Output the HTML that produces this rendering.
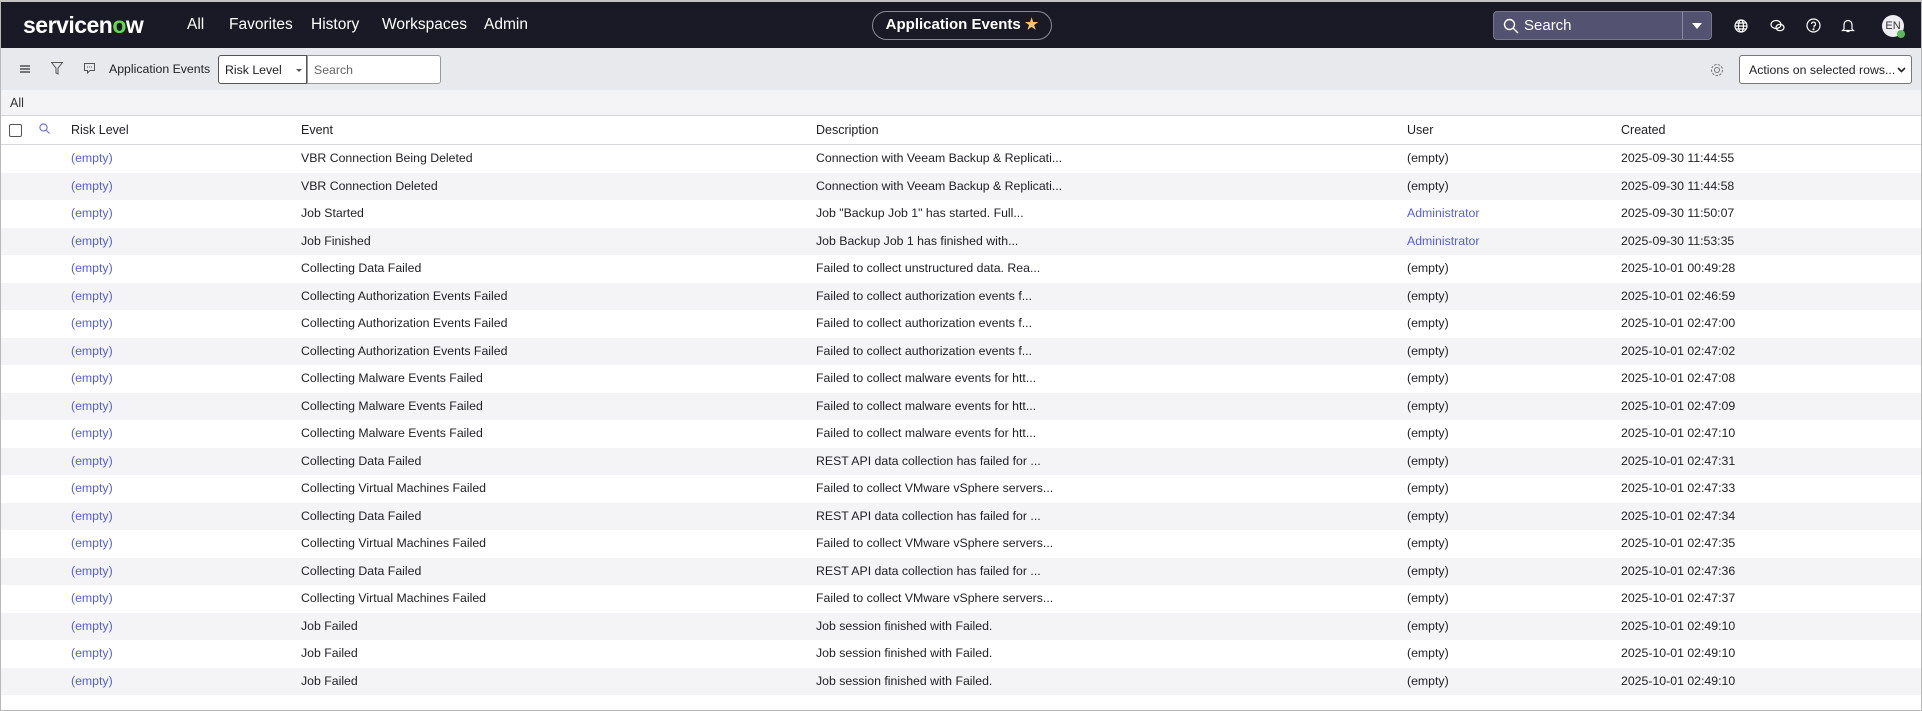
<!DOCTYPE html>
<html><head><meta charset="utf-8"><style>
*{box-sizing:border-box;margin:0;padding:0}
body{width:1922px;height:711px;overflow:hidden;background:#fff;font-family:"Liberation Sans",sans-serif;color:#1e1e24;position:relative;border:1px solid #b8b8b8;border-top:2px solid #c4c4c4}
.nav{position:absolute;left:0;top:0;width:1920px;height:46px;background:#1a1a26;color:#fff}
.nav .t{position:absolute;top:14px;font-size:15.5px;white-space:nowrap}
.logo{position:absolute;left:22px;top:10px;font-size:23px;font-weight:bold;letter-spacing:-0.5px}
.pill{position:absolute;left:871px;top:9px;width:180px;height:29px;border:1.5px solid #8a8a96;border-radius:15px;font-size:15px;font-weight:bold;text-align:center;line-height:26px}
.sb{position:absolute;left:1492px;top:9px;width:219px;height:29px;background:#535270;border:1px solid #77768c;border-radius:4px}
.tb{position:absolute;left:0;top:46px;width:1920px;height:42px;background:#e8e9ed}
.all{position:absolute;left:0;top:88px;width:1920px;height:26px;background:#f4f4f6;border-bottom:1px solid #d6d6da;font-size:12.5px;padding:6px 9px;color:#333}
.hdr{position:absolute;left:0;top:114px;width:1920px;height:29px;border-bottom:1px solid #d6d6da;font-size:12.5px}
.c{position:absolute;white-space:nowrap}
.rows{position:absolute;left:0;top:143px;width:1920px}
.r{height:27.5px;position:relative;font-size:12.3px}
.r:nth-child(even){background:#f4f4f6}
.r .c{top:6px}
.lk{color:#5560d8}
</style></head><body>
<div class="nav">
<div class="logo">servicen<span style="color:#62d84e">o</span>w</div>
<div class="t" style="left:186px">All</div>
<div class="t" style="left:228px">Favorites</div>
<div class="t" style="left:310px">History</div>
<div class="t" style="left:381px">Workspaces</div>
<div class="t" style="left:483px">Admin</div>
<div class="pill">Application Events <span style="color:#f5c46a">★</span></div>
<div class="sb"><svg style="position:absolute;left:9px;top:6px" width="16" height="16" viewBox="0 0 16 16" fill="none" stroke="#fff" stroke-width="1.4"><circle cx="6.5" cy="6.5" r="5"/><path d="M10 10l5 5"/></svg><span style="position:absolute;left:30px;top:5px;font-size:15px">Search</span><div style="position:absolute;left:188px;top:0;width:1px;height:27px;background:#8a8a9e"></div><div style="position:absolute;left:198px;top:11px;border-left:5px solid transparent;border-right:5px solid transparent;border-top:6px solid #fff"></div></div>
<svg style="position:absolute;left:1733px;top:17px" width="14" height="14" viewBox="0 0 14 14" fill="none" stroke="#fff" stroke-width="1.2"><circle cx="7" cy="7" r="6"/><ellipse cx="7" cy="7" rx="2.5" ry="6"/><path d="M1 7h12M2 4h10M2 10h10"/></svg>
<svg style="position:absolute;left:1769px;top:17px" width="15" height="14" viewBox="0 0 15 14" fill="none" stroke="#fff" stroke-width="1.2"><ellipse cx="6" cy="5.5" rx="5" ry="4"/><ellipse cx="10" cy="8.5" rx="4" ry="3.2"/></svg>
<svg style="position:absolute;left:1805px;top:16px" width="15" height="15" viewBox="0 0 15 15" fill="none" stroke="#fff" stroke-width="1.2"><circle cx="7.5" cy="7.5" r="6.5"/><path d="M5.5 6a2 2 0 1 1 2.5 2v1.5"/><circle cx="7.5" cy="11.3" r=".5" fill="#fff"/></svg>
<svg style="position:absolute;left:1840px;top:16px" width="14" height="15" viewBox="0 0 14 15" fill="none" stroke="#fff" stroke-width="1.2"><path d="M3 11V6.5a4 4 0 0 1 8 0V11l1.5 1.5h-11z"/><path d="M5.5 13.5h3"/></svg>
<div style="position:absolute;left:1881px;top:13px;width:22px;height:22px;border-radius:50%;background:#eeeef2;color:#333;font-size:11px;text-align:center;line-height:22px">EN</div>
<div style="position:absolute;left:1896px;top:28px;width:8px;height:8px;border-radius:50%;background:#5cb85c"></div>
</div>
<div class="tb">
<svg style="position:absolute;left:19px;top:17px" width="10" height="8" viewBox="0 0 10 8" stroke="#333" stroke-width="1.3"><path d="M0 1h10M0 4h10M0 7h10"/></svg>
<svg style="position:absolute;left:50px;top:14px" width="12" height="13" viewBox="0 0 12 13" fill="none" stroke="#555" stroke-width="1"><path d="M.5 .5h11L7 6v6L5 11V6z"/></svg>
<svg style="position:absolute;left:83px;top:15px" width="11" height="11" viewBox="0 0 11 11" fill="none" stroke="#555" stroke-width="1"><path d="M.5 .5h10v7H6l-2.5 2.5V7.5h-3z"/><path d="M3 4h5" stroke-dasharray="1 1"/></svg>
<div class="c" style="left:108px;top:14px;font-size:12.3px">Application Events</div>
<div style="position:absolute;left:217px;top:7px;width:89px;height:29px;background:#fff;border:1px solid #555;border-radius:3px 0 0 3px;font-size:12.3px;padding:7px 6px;white-space:nowrap">Risk Level<span style="position:absolute;left:77px;top:13px;border-left:3px solid transparent;border-right:3px solid transparent;border-top:3px solid #555"></span></div>
<div style="position:absolute;left:306px;top:7px;width:134px;height:29px;background:#fff;border:1px solid #999;border-radius:0 3px 3px 0;font-size:12.3px;padding:7px 6px;color:#666">Search</div>
<svg style="position:absolute;left:1709px;top:15px" width="14" height="14" viewBox="0 0 14 14" fill="none" stroke="#777" stroke-width="1"><circle cx="7" cy="7" r="2.5"/><circle cx="7" cy="7" r="5.5" stroke-dasharray="2.5 1.3"/></svg>
<div style="position:absolute;left:1738px;top:7px;width:173px;height:29px;background:#fff;border:1px solid #777;border-radius:3px;font-size:12.3px;padding:7px 9px;white-space:nowrap">Actions on selected rows...<svg style="position:absolute;right:5px;top:11px" width="9" height="6" viewBox="0 0 9 6" fill="none" stroke="#222" stroke-width="1.6"><path d="M1 1l3.5 3.5L8 1"/></svg></div>
</div>
<div class="all">All</div>
<div class="hdr">
<div style="position:absolute;left:8px;top:8px;width:13px;height:13px;border:1px solid #555;border-radius:2px"></div>
<svg style="position:absolute;left:38px;top:7px" width="11" height="11" viewBox="0 0 11 11" fill="none" stroke="#6a6ad0" stroke-width="1.1"><circle cx="4.5" cy="4.5" r="3.6"/><path d="M7 7l3.5 3.5"/></svg>
<div class="c" style="left:70px;top:7px">Risk Level</div>
<div class="c" style="left:300px;top:7px">Event</div>
<div class="c" style="left:815px;top:7px">Description</div>
<div class="c" style="left:1406px;top:7px">User</div>
<div class="c" style="left:1620px;top:7px">Created</div>
</div>
<div class="rows">
<div class="r"><span class="c lk" style="left:70px">(empty)</span><span class="c" style="left:300px">VBR Connection Being Deleted</span><span class="c" style="left:815px">Connection with Veeam Backup &amp; Replicati...</span><span class="c" style="left:1406px">(empty)</span><span class="c" style="left:1620px">2025-09-30 11:44:55</span></div>
<div class="r"><span class="c lk" style="left:70px">(empty)</span><span class="c" style="left:300px">VBR Connection Deleted</span><span class="c" style="left:815px">Connection with Veeam Backup &amp; Replicati...</span><span class="c" style="left:1406px">(empty)</span><span class="c" style="left:1620px">2025-09-30 11:44:58</span></div>
<div class="r"><span class="c lk" style="left:70px">(empty)</span><span class="c" style="left:300px">Job Started</span><span class="c" style="left:815px">Job "Backup Job 1" has started. Full...</span><span class="c lk" style="left:1406px">Administrator</span><span class="c" style="left:1620px">2025-09-30 11:50:07</span></div>
<div class="r"><span class="c lk" style="left:70px">(empty)</span><span class="c" style="left:300px">Job Finished</span><span class="c" style="left:815px">Job Backup Job 1 has finished with...</span><span class="c lk" style="left:1406px">Administrator</span><span class="c" style="left:1620px">2025-09-30 11:53:35</span></div>
<div class="r"><span class="c lk" style="left:70px">(empty)</span><span class="c" style="left:300px">Collecting Data Failed</span><span class="c" style="left:815px">Failed to collect unstructured data. Rea...</span><span class="c" style="left:1406px">(empty)</span><span class="c" style="left:1620px">2025-10-01 00:49:28</span></div>
<div class="r"><span class="c lk" style="left:70px">(empty)</span><span class="c" style="left:300px">Collecting Authorization Events Failed</span><span class="c" style="left:815px">Failed to collect authorization events f...</span><span class="c" style="left:1406px">(empty)</span><span class="c" style="left:1620px">2025-10-01 02:46:59</span></div>
<div class="r"><span class="c lk" style="left:70px">(empty)</span><span class="c" style="left:300px">Collecting Authorization Events Failed</span><span class="c" style="left:815px">Failed to collect authorization events f...</span><span class="c" style="left:1406px">(empty)</span><span class="c" style="left:1620px">2025-10-01 02:47:00</span></div>
<div class="r"><span class="c lk" style="left:70px">(empty)</span><span class="c" style="left:300px">Collecting Authorization Events Failed</span><span class="c" style="left:815px">Failed to collect authorization events f...</span><span class="c" style="left:1406px">(empty)</span><span class="c" style="left:1620px">2025-10-01 02:47:02</span></div>
<div class="r"><span class="c lk" style="left:70px">(empty)</span><span class="c" style="left:300px">Collecting Malware Events Failed</span><span class="c" style="left:815px">Failed to collect malware events for htt...</span><span class="c" style="left:1406px">(empty)</span><span class="c" style="left:1620px">2025-10-01 02:47:08</span></div>
<div class="r"><span class="c lk" style="left:70px">(empty)</span><span class="c" style="left:300px">Collecting Malware Events Failed</span><span class="c" style="left:815px">Failed to collect malware events for htt...</span><span class="c" style="left:1406px">(empty)</span><span class="c" style="left:1620px">2025-10-01 02:47:09</span></div>
<div class="r"><span class="c lk" style="left:70px">(empty)</span><span class="c" style="left:300px">Collecting Malware Events Failed</span><span class="c" style="left:815px">Failed to collect malware events for htt...</span><span class="c" style="left:1406px">(empty)</span><span class="c" style="left:1620px">2025-10-01 02:47:10</span></div>
<div class="r"><span class="c lk" style="left:70px">(empty)</span><span class="c" style="left:300px">Collecting Data Failed</span><span class="c" style="left:815px">REST API data collection has failed for ...</span><span class="c" style="left:1406px">(empty)</span><span class="c" style="left:1620px">2025-10-01 02:47:31</span></div>
<div class="r"><span class="c lk" style="left:70px">(empty)</span><span class="c" style="left:300px">Collecting Virtual Machines Failed</span><span class="c" style="left:815px">Failed to collect VMware vSphere servers...</span><span class="c" style="left:1406px">(empty)</span><span class="c" style="left:1620px">2025-10-01 02:47:33</span></div>
<div class="r"><span class="c lk" style="left:70px">(empty)</span><span class="c" style="left:300px">Collecting Data Failed</span><span class="c" style="left:815px">REST API data collection has failed for ...</span><span class="c" style="left:1406px">(empty)</span><span class="c" style="left:1620px">2025-10-01 02:47:34</span></div>
<div class="r"><span class="c lk" style="left:70px">(empty)</span><span class="c" style="left:300px">Collecting Virtual Machines Failed</span><span class="c" style="left:815px">Failed to collect VMware vSphere servers...</span><span class="c" style="left:1406px">(empty)</span><span class="c" style="left:1620px">2025-10-01 02:47:35</span></div>
<div class="r"><span class="c lk" style="left:70px">(empty)</span><span class="c" style="left:300px">Collecting Data Failed</span><span class="c" style="left:815px">REST API data collection has failed for ...</span><span class="c" style="left:1406px">(empty)</span><span class="c" style="left:1620px">2025-10-01 02:47:36</span></div>
<div class="r"><span class="c lk" style="left:70px">(empty)</span><span class="c" style="left:300px">Collecting Virtual Machines Failed</span><span class="c" style="left:815px">Failed to collect VMware vSphere servers...</span><span class="c" style="left:1406px">(empty)</span><span class="c" style="left:1620px">2025-10-01 02:47:37</span></div>
<div class="r"><span class="c lk" style="left:70px">(empty)</span><span class="c" style="left:300px">Job Failed</span><span class="c" style="left:815px">Job session finished with Failed.</span><span class="c" style="left:1406px">(empty)</span><span class="c" style="left:1620px">2025-10-01 02:49:10</span></div>
<div class="r"><span class="c lk" style="left:70px">(empty)</span><span class="c" style="left:300px">Job Failed</span><span class="c" style="left:815px">Job session finished with Failed.</span><span class="c" style="left:1406px">(empty)</span><span class="c" style="left:1620px">2025-10-01 02:49:10</span></div>
<div class="r"><span class="c lk" style="left:70px">(empty)</span><span class="c" style="left:300px">Job Failed</span><span class="c" style="left:815px">Job session finished with Failed.</span><span class="c" style="left:1406px">(empty)</span><span class="c" style="left:1620px">2025-10-01 02:49:10</span></div>
</div>
</body></html>
